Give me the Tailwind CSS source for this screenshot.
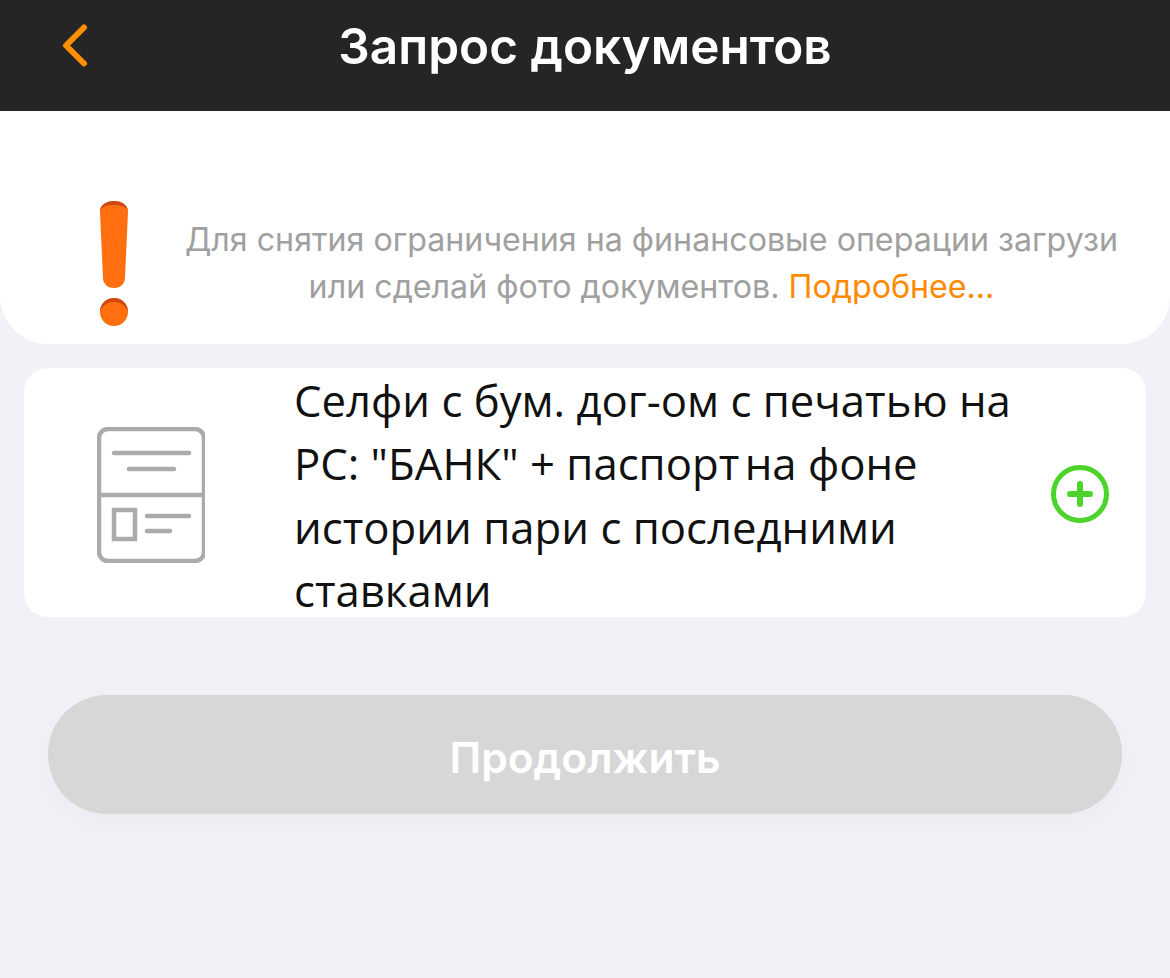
<!DOCTYPE html>
<html lang="ru">
<head>
    <meta charset="UTF-8">
    <meta name="viewport" content="width=device-width, initial-scale=1.0">
    <title>Запрос документов</title>
    <script src="https://cdn.jsdelivr.net/npm/@tailwindcss/browser@4"></script>
</head>
<body class="bg-[#f1f1f7] h-[978px] overflow-hidden font-['Inter','Roboto',sans-serif]">
    <!-- header -->
    <div class="h-[111px] bg-[#252525] flex items-center pb-[18px] relative">
        <svg class="w-[30px] h-[46px] ml-[60px]" viewBox="0 0 30 46" fill="none" stroke="#ff9100" stroke-width="6" stroke-linecap="round" stroke-linejoin="round">
            <path d="M24 3.5L6 21.5L24 39.5"></path>
        </svg>
        <h1 class="absolute left-0 right-0 top-[16px] text-center text-[49.5px] leading-[60px] font-semibold text-white">Запрос документов</h1>
    </div>

    <!-- notice -->
    <div class="h-[233px] bg-white rounded-b-[48px] flex pl-[97px] pr-[19px]">
        <svg class="w-[34px] h-[128px] mt-[88px] flex-none" viewBox="0 0 34 128">
            <path d="M3 13C3 6 9 2 17 2C25 2 31 6 31 13L28 79C28 84 24 89 17 89C10 89 6 84 6 79Z" fill="#ff6f0f"></path>
            <path d="M3 13C3 6 9 2 17 2C25 2 31 6 31 13C30 8 25 6 17 6C9 6 4 8 3 13Z" fill="#cf4a12"></path>
            <circle cx="17" cy="113" r="14" fill="#ff6f0f"></circle>
            <path d="M3 113C3 105 9 99 17 99C25 99 31 105 31 113C29 107 24 103 17 103C10 103 5 107 3 113Z" fill="#cf4a12"></path>
        </svg>
        <p class="flex-1 ml-[21px] mt-[105px] text-center text-[32.2px] leading-[47px] text-[#a0a0a0] whitespace-nowrap">
            Для снятия ограничения на финансовые операции загрузи<br>или сделай фото документов. <span class="text-[#ff8a00]">Подробнее...</span>
        </p>
    </div>

    <!-- document card -->
    <div class="mt-[24px] mx-[24px] h-[249px] bg-white rounded-[24px] flex items-center">
        <svg class="w-[108px] h-[136px] ml-[73px] mt-[5px] flex-none" viewBox="0 0 108 136" fill="none" stroke="#ababab" stroke-width="4.5" stroke-linecap="round">
            <rect x="2" y="2" width="105" height="132" rx="9"></rect>
            <path d="M2 68H106" stroke-linecap="butt"></path>
            <path d="M17 26H92M32 42H77M50 89H92M50 104H73"></path>
            <rect x="17" y="83" width="21" height="29" stroke-linecap="butt"></rect>
        </svg>
        <p class="ml-[89px] w-[740px] mt-[6px] flex-none text-[43.7px] leading-[63.5px] text-[#111] font-['Open_Sans','Inter',sans-serif] whitespace-nowrap">
            Селфи с бум. дог-ом с печатью на<br>РС: "БАНК" + <span class="[word-spacing:-6px]">паспорт на</span> фоне<br>истории пари с последними<br>ставками
        </p>
        <svg class="w-[60px] h-[60px] ml-[16px] mt-[3px] flex-none" viewBox="0 0 60 60" fill="none" stroke="#4cd42b" stroke-linecap="round">
            <circle cx="30" cy="30" r="26.5" stroke-width="5"></circle>
            <path d="M20 30H40M30 20V40" stroke-width="6"></path>
        </svg>
    </div>

    <!-- continue button -->
    <button class="block mt-[78px] mx-[48px] w-[1074px] h-[119px] pt-[6px] rounded-[59px] bg-[#d7d7d7] text-white text-[42.5px] font-semibold shadow-[0_8px_30px_rgba(0,0,0,0.03)]">
        Продолжить
    </button>
</body>
</html>
